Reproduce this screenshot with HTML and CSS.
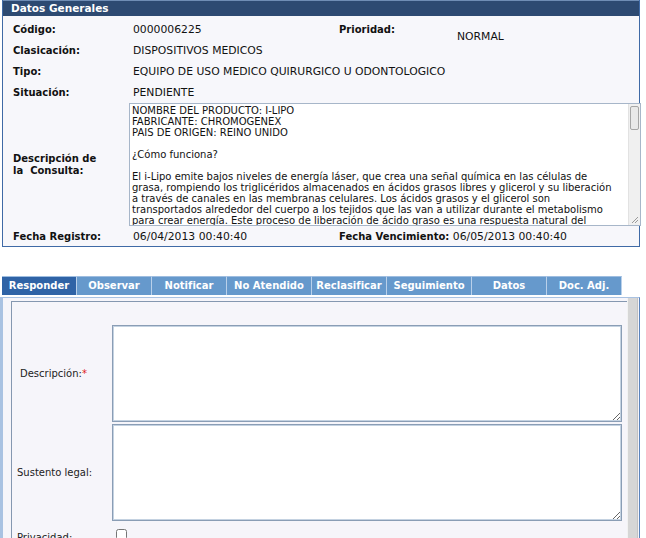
FILE: index.html
```html
<!DOCTYPE html>
<html lang="es">
<head>
<meta charset="utf-8">
<title>Datos Generales</title>
<link rel="stylesheet" href="styles.css">
</head>
<body>
<div class="datos">
  <div class="hdr">Datos Generales</div>
  <div class="grid">
    <div class="lbl">Código:</div>
    <div class="val">0000006225</div>
    <div class="lbl">Prioridad:</div>
    <div class="val low">NORMAL</div>

    <div class="lbl">Clasicación:</div>
    <div class="val span3">DISPOSITIVOS MEDICOS</div>

    <div class="lbl">Tipo:</div>
    <div class="val span3">EQUIPO DE USO MEDICO QUIRURGICO U ODONTOLOGICO</div>

    <div class="lbl">Situación:</div>
    <div class="val span3">PENDIENTE</div>

    <div class="lbl desc">Descripción de<br>la&nbsp; Consulta:</div>
    <div class="span3 consulta">
      <div class="ctext">NOMBRE DEL PRODUCTO: I-LIPO
FABRICANTE: CHROMOGENEX
PAIS DE ORIGEN: REINO UNIDO

¿Cómo funciona?

El i-Lipo emite bajos niveles de energía láser, que crea una señal química en las células de
grasa, rompiendo los triglicéridos almacenados en ácidos grasos libres y glicerol y su liberación
a través de canales en las membranas celulares. Los ácidos grasos y el glicerol son
transportados alrededor del cuerpo a los tejidos que las van a utilizar durante el metabolismo
para crear energía. Este proceso de liberación de ácido graso es una respuesta natural del</div>
      <div class="vscroll">
        <div class="thumb"></div>
        <svg class="grip" width="9" height="9" viewBox="0 0 9 9"><path d="M8 2 L2 8 M8 5 L5 8" stroke="#9a9a9a" stroke-width="1" fill="none"/></svg>
      </div>
    </div>

    <div class="lbl">Fecha Registro:</div>
    <div class="val">06/04/2013 00:40:40</div>
    <div class="lbl fv">Fecha Vencimiento: <span class="reg">06/05/2013 00:40:40</span></div>
  </div>
</div>

<div class="tabs">
  <div class="tab active w75">Responder</div>
  <div class="tab w75">Observar</div>
  <div class="tab w75">Notificar</div>
  <div class="tab w85">No Atendido</div>
  <div class="tab w75">Reclasificar</div>
  <div class="tab w85">Seguimiento</div>
  <div class="tab w75">Datos</div>
  <div class="tab w75">Doc. Adj.</div>
</div>

<div class="panel">
  <div class="pcontent">
    <div class="form">
      <div class="frow">
        <div class="flbl first">Descripción:<span class="req">*</span></div>
        <textarea class="fta"></textarea>
      </div>
      <div class="frow">
        <div class="flbl">Sustento legal:</div>
        <textarea class="fta"></textarea>
      </div>
      <div class="frow check">
        <div class="flbl">Privacidad:</div>
        <input type="checkbox" class="cb">
      </div>
    </div>
  </div>
  <div class="pscroll"></div>
</div>
</body>
</html>
```

FILE: styles.css
```css
html, body {
  margin: 0;
  padding: 0;
  background: #ffffff;
}
body {
  font-family: Verdana, "DejaVu Sans", sans-serif;
  font-size: 10px;
  color: #000;
  overflow: hidden;
}
.datos {
  margin-left: 2px;
  width: 636px;
  border: 1px solid #3f6aa6;
  border-top: none;
  background: #f7f7fb;
}
.hdr {
  background: #2d4a72;
  color: #fff;
  font-weight: bold;
  font-size: 10.5px;
  height: 16px;
  line-height: 15px;
  padding-left: 8px;
  border-top: 1px solid #6f8db5;
  box-sizing: border-box;
}
.grid {
  display: grid;
  grid-template-columns: 120px 206px 118px 1fr;
  grid-template-rows: 21px 21px 21px 21px 123px 20px;
  padding: 3px 0 0 10px;
  align-items: center;
}
.lbl {
  font-weight: bold;
  color: #111;
}
.val {
  color: #111;
  font-size: 10.8px;
}
.low {
  padding-top: 13px;
}
.span3 {
  grid-column: span 3;
}
.desc {
  line-height: 12px;
  padding-top: 0;
}
.consulta {
  align-self: stretch;
  display: flex;
  box-sizing: border-box;
  margin-left: -4px;
  width: 512px;
  height: 123px;
  border: 1px solid #a7b6c9;
  background: #fff;
}
.ctext {
  flex: 1;
  overflow: hidden;
  white-space: pre;
  font-size: 10px;
  line-height: 11px;
  padding: 1px 0 0 2px;
  color: #111;
}
.vscroll {
  width: 11px;
  display: flex;
  flex-direction: column;
  background: #f0f0f0;
  border-left: 1px solid #e2e2e2;
}
.thumb {
  height: 22px;
  margin: 2px 1px 0 1px;
  background: #e9e9e9;
  border: 1px solid #a6a6a6;
  border-radius: 2px;
}
.grip {
  margin-top: auto;
  margin-left: 1px;
  margin-bottom: 1px;
}
.fv {
  grid-column: span 2;
  white-space: nowrap;
}
.reg {
  font-weight: normal;
  font-size: 10.8px;
}
.tabs {
  display: flex;
  margin: 29px 0 0 2px;
  height: 19px;
}
.tab {
  box-sizing: border-box;
  height: 19px;
  line-height: 18px;
  background: #6699cc;
  color: #fff;
  font-weight: bold;
  text-align: center;
  border-top: 1px solid #9ebde0;
  border-right: 1px solid #b9d0ea;
  white-space: nowrap;
  overflow: hidden;
}
.tab.active {
  background: #2f63a6;
}
.w75 { width: 75px; }
.w85 { width: 85px; }
.panel {
  display: flex;
  margin-top: 2px;
  width: 640px;
  height: 260px;
  box-sizing: border-box;
  border-left: 3px solid #a9c2e2;
  border-right: 1px solid #5b84bd;
  border-top: 1px solid #a9c2e2;
  background: #f6f5fa;
}
.pcontent {
  flex: 1;
  overflow: hidden;
  padding: 3px 0 0 8px;
}
.pscroll {
  width: 9px;
  margin-right: 1px;
  background: #d6d6d6;
  border-left: 1px solid #f2f2f2;
  border-right: 1px solid #c2c2c2;
}
.form {
  border-left: 1px solid #8597b0;
  border-top: 1px solid #8597b0;
  height: 400px;
  padding: 23px 0 0 0;
  box-sizing: border-box;
}
.frow {
  display: flex;
  align-items: center;
  margin-bottom: 2px;
}
.flbl {
  width: 100px;
  padding-left: 5px;
  box-sizing: border-box;
  font-size: 10px;
  color: #222;
}
.flbl.first {
  padding-left: 8px;
}
.req {
  color: #e02020;
}
.fta {
  box-sizing: border-box;
  width: 510px;
  height: 97px;
  margin: 0;
  border: 1px solid #8a9db5;
  box-shadow: inset 0 0 0 1px #c4d2e1;
  background: #fff;
  resize: both;
}
.check {
  align-items: flex-start;
  padding-top: 6px;
}
.check .flbl {
  padding-top: 3px;
}
.cb {
  margin: 0 0 0 4px;
  width: 11px;
  height: 11px;
}
```
